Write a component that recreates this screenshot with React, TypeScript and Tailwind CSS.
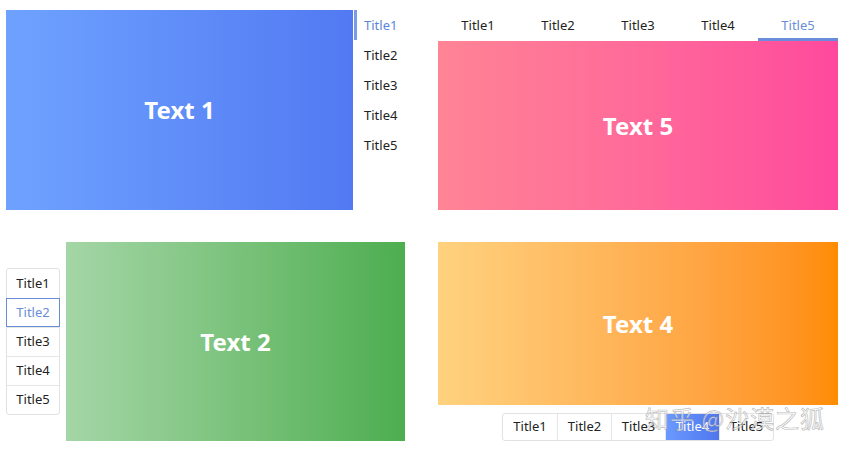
import React, { useState } from 'react';

const titles = ['Title1', 'Title2', 'Title3', 'Title4', 'Title5'];
const font = { fontFamily: '"Noto Sans", "Open Sans", sans-serif' };

function Panel({ label, className }: { label: string; className: string }) {
  return (
    <div className={`flex items-center justify-center text-white text-[24px] font-bold ${className}`}>
      {label}
    </div>
  );
}

export default function App() {
  const [leftTab, setLeftTab] = useState(0);
  const [topTab, setTopTab] = useState(4);
  const [sideTab, setSideTab] = useState(1);
  const [bottomTab, setBottomTab] = useState(3);

  return (
    <div className="relative w-[846px] h-[453px] bg-white text-[13px] text-[#222]" style={font}>
      <div className="flex pt-[10px] pl-[6px]">
        {/* Vertical tabs, right side */}
        <div className="flex w-[432px]">
          <Panel label="Text 1" className="w-[347px] h-[200px] bg-gradient-to-r from-[#6fa2ff] to-[#5279f2]" />
          <div className="flex flex-col ml-px">
            {titles.map((t, i) => (
              <button
                key={t}
                onClick={() => setLeftTab(i)}
                className={`h-[30px] pt-[2px] pl-[7px] text-left border-l-[3px] ${
                  leftTab === i ? 'border-[#7a9be6] text-[#5b86d8]' : 'border-transparent'
                }`}
              >
                {t}
              </button>
            ))}
          </div>
        </div>

        {/* Horizontal tabs, top */}
        <div className="flex flex-col w-[400px]">
          <div className="flex h-[31px]">
            {titles.map((t, i) => (
              <button
                key={t}
                onClick={() => setTopTab(i)}
                className={`flex-1 pt-[3px] border-b-[3px] ${
                  topTab === i ? 'border-[#6b8bdb] text-[#6a8ed6]' : 'border-transparent'
                }`}
              >
                {t}
              </button>
            ))}
          </div>
          <Panel label="Text 5" className="h-[169px] bg-gradient-to-r from-[#ff8495] to-[#ff499d]" />
        </div>
      </div>

      <div className="flex pt-[32px] pl-[6px]">
        {/* Segmented vertical tabs, left side */}
        <div className="flex items-center w-[432px]">
          <div className="flex flex-col w-[54px] border border-[#e2e2e2] rounded-[3px]">
            {titles.map((t, i) => (
              <button
                key={t}
                onClick={() => setSideTab(i)}
                className={`h-[29px] border-t first:border-t-0 ${
                  sideTab === i
                    ? 'border border-[#6a8ed6] text-[#6a8ed6] -mx-px'
                    : 'border-[#e6e6e6]'
                }`}
              >
                {t}
              </button>
            ))}
          </div>
          <Panel label="Text 2" className="ml-[6px] w-[339px] h-[199px] bg-gradient-to-r from-[#a4d6a6] to-[#4cae4f]" />
        </div>

        {/* Segmented horizontal tabs, bottom */}
        <div className="flex flex-col items-center w-[400px]">
          <Panel label="Text 4" className="w-full h-[163px] bg-gradient-to-r from-[#ffd27f] to-[#ff8c00]" />
          <div className="flex mt-[8px] h-[28px] border border-[#e2e2e2] rounded-[3px] overflow-hidden">
            {titles.map((t, i) => (
              <button
                key={t}
                onClick={() => setBottomTab(i)}
                className={`w-[54px] border-l first:border-l-0 border-[#e6e6e6] ${
                  bottomTab === i ? 'bg-gradient-to-r from-[#6a9aff] to-[#4f76ee] text-white' : ''
                }`}
              >
                {t}
              </button>
            ))}
          </div>
        </div>
      </div>

      {/* watermark */}
      <div
        className="absolute left-[645px] top-[400px] text-[24px] tracking-[1px] text-white/60 pointer-events-none"
        style={{ fontFamily: '"Noto Sans CJK SC", sans-serif', WebkitTextStroke: '0.7px rgba(120,120,120,0.5)' }}
      >
        知乎 @沙漠之狐
      </div>
    </div>
  );
}
